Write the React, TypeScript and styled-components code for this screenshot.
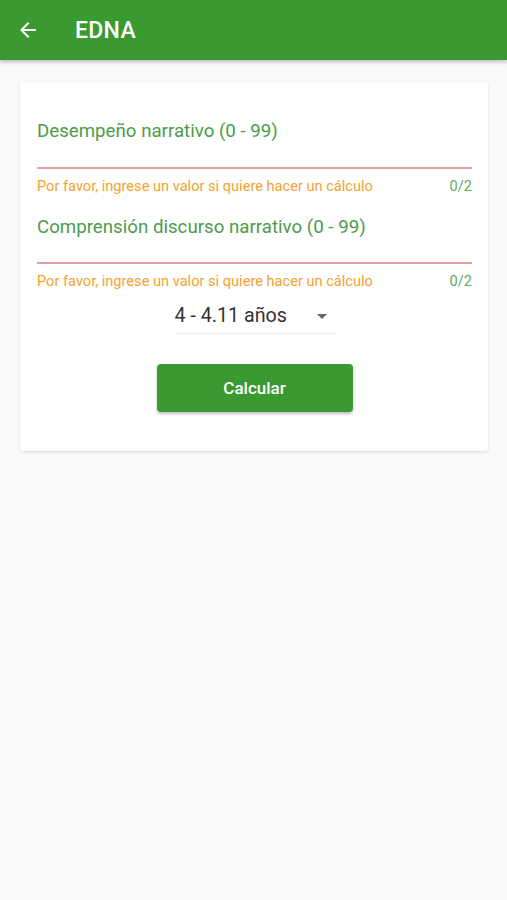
import styled, { createGlobalStyle } from "styled-components"

const GlobalStyle = createGlobalStyle`
  html, body {
    margin: 0;
    padding: 0;
    background: #f9f9f9;
    font-family: Roboto, "Noto Sans", "Liberation Sans", sans-serif;
  }
`

const GREEN = "#3a9a31"

const Page = styled.div`
  min-height: 900px;
  background: #f9f9f9;
`

const AppBar = styled.header`
  height: 60px;
  background: ${GREEN};
  display: flex;
  align-items: center;
  padding-left: 16px;
  box-shadow: 0 2px 4px rgba(0, 0, 0, 0.25);
`

const BackButton = styled.button`
  width: 24px;
  height: 24px;
  padding: 0;
  border: none;
  background: none;
  display: flex;
  color: #fff;
`

const Title = styled.h1`
  margin: 0 0 0 35px;
  font-size: 23px;
  font-weight: 500;
  color: #fff;
  letter-spacing: 0.3px;
`

const Card = styled.section`
  margin: 22px 19px 0 20px;
  background: #fff;
  border-radius: 3px;
  box-shadow: 0 1px 3px rgba(0, 0, 0, 0.12);
  padding: 37px 16px 39px 17px;
  display: flex;
  flex-direction: column;
`

const Field = styled.div<{ $top?: number }>`
  margin-top: ${(p) => p.$top ?? 0}px;
  display: flex;
  flex-direction: column;
`

const Label = styled.label`
  font-size: 18.7px;
  line-height: 24px;
  color: #4c9c4a;
`

const Underline = styled.div<{ $gap: number }>`
  margin-top: ${(p) => p.$gap}px;
  height: 2px;
  background: #e3a1a3;
`

const HelperRow = styled.div`
  margin-top: 9px;
  display: flex;
  justify-content: space-between;
  font-size: 14.6px;
  line-height: 16px;
`

const Helper = styled.span`
  color: #f3a232;
`

const Counter = styled.span`
  color: #64a862;
`

const Select = styled.div`
  align-self: center;
  margin-top: 15px;
  width: 160px;
  height: 29px;
  border-bottom: 1px solid #ececec;
  display: flex;
  align-items: flex-start;
  justify-content: space-between;
  font-size: 19.7px;
  line-height: 24px;
  color: #333;
`

const Caret = styled.span`
  width: 0;
  height: 0;
  margin: 10px 8px 0 0;
  border-left: 5px solid transparent;
  border-right: 5px solid transparent;
  border-top: 5px solid #666;
`

const Button = styled.button`
  align-self: center;
  margin-top: 30px;
  width: 196px;
  height: 48px;
  border: none;
  border-radius: 4px;
  background: ${GREEN};
  color: #fff;
  font-family: inherit;
  font-size: 17px;
  font-weight: 500;
  box-shadow: 0 2px 3px rgba(0, 0, 0, 0.25);
`

const fields = [
  { label: "Desempeño narrativo (0 - 99)", gap: 24, top: 0 },
  { label: "Comprensión discurso narrativo (0 - 99)", gap: 23, top: 21 },
]

export default function App() {
  return (
    <Page>
      <GlobalStyle />
      <AppBar>
        <BackButton aria-label="Volver">
          <svg width="24" height="24" viewBox="0 0 24 24" fill="currentColor">
            <path d="M20 11H7.83l5.59-5.59L12 4l-8 8 8 8 1.41-1.41L7.83 13H20v-2z" />
          </svg>
        </BackButton>
        <Title>EDNA</Title>
      </AppBar>
      <Card>
        {fields.map((f) => (
          <Field key={f.label} $top={f.top}>
            <Label>{f.label}</Label>
            <Underline $gap={f.gap} />
            <HelperRow>
              <Helper>Por favor, ingrese un valor si quiere hacer un cálculo</Helper>
              <Counter>0/2</Counter>
            </HelperRow>
          </Field>
        ))}
        <Select>
          <span>4 - 4.11 años</span>
          <Caret />
        </Select>
        <Button>Calcular</Button>
      </Card>
    </Page>
  )
}
